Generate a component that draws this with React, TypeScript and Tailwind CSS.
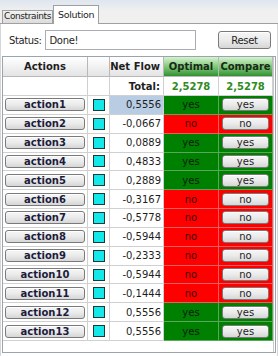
const rows: [string, string, boolean][] = [
  ['action1', '0,5556', true],
  ['action2', '-0,0667', false],
  ['action3', '0,0889', true],
  ['action4', '0,4833', true],
  ['action5', '0,2889', true],
  ['action6', '-0,3167', false],
  ['action7', '-0,5778', false],
  ['action8', '-0,5944', false],
  ['action9', '-0,2333', false],
  ['action10', '-0,5944', false],
  ['action11', '-0,1444', false],
  ['action12', '0,5556', true],
  ['action13', '0,5556', true],
]

const cols = 'grid grid-cols-[85px_22px_54px_55px_54px]'
const btn =
  'rounded-[3px] border border-[#7a7a7a] bg-gradient-to-b from-[#f6f6f6] via-[#ebebeb] to-[#d6d6d6] shadow-[inset_0_1px_0_#fff]'

export default function App() {
  return (
    <div
      className="flex h-[356px] w-[278px] flex-col overflow-hidden bg-white text-[10px] text-[#1e1e1e]"
      style={{ fontFamily: 'Tahoma, "DejaVu Sans", sans-serif' }}
    >
      {/* tab strip */}
      <div className="relative flex h-[24px] items-end border-b border-[#a0a0a0] bg-gradient-to-b from-[#dfe6ef] via-[#f0f0f0] to-[#f0f0f0] pl-[2px]">
        <div className="flex h-[13px] items-center border border-b-0 border-[#a0a0a0] bg-gradient-to-b from-[#f2f2f2] to-[#dcdcdc] px-[1px] text-[9px] tracking-[-0.4px]">
          Constraints
        </div>
        <div className="relative -mb-px flex h-[19px] items-center border border-b-0 border-[#a0a0a0] bg-white px-[4px] text-[9.5px] tracking-[-0.3px]">
          Solution
        </div>
      </div>

      {/* panel */}
      <div className="flex flex-1 flex-col border-l border-r border-[#d6d6d6] pb-[3px] pl-[1px] pr-[1px]">
        <div className="flex h-[32px] items-center pl-[7px] pr-[5px]">
          <span className="text-[10px] tracking-[-0.4px]">Status:</span>
          <div className="ml-[4px] flex h-[20px] w-[151px] items-center border border-[#abadb3] px-[3px] tracking-[-0.3px]">
            Done!
          </div>
          <div className="flex-1" />
          <div className={`flex h-[18px] w-[53px] items-center justify-center ${btn} tracking-[-0.3px]`}>
            Reset
          </div>
        </div>

        <div className="flex flex-1 border border-[#9aa4b0]">
          <div className="flex-1 bg-white">
            {/* header */}
            <div className={`${cols} h-[20px] font-bold`}>
              <div className="flex items-center justify-center border-b border-r border-[#b8b8b8] bg-gradient-to-b from-[#ffffff] to-[#e4e4e4]">
                Actions
              </div>
              <div className="border-b border-r border-[#b8b8b8] bg-gradient-to-b from-[#ffffff] to-[#e4e4e4]" />
              <div className="flex items-center justify-end border-b border-r border-[#b8b8b8] bg-gradient-to-b from-[#ffffff] to-[#e4e4e4] pr-[3px]">
                Net Flow
              </div>
              <div className="flex items-center justify-center border-b border-r border-[#b8b8b8] bg-gradient-to-b from-[#d6f2cf] via-[#7fc97a] to-[#2f912f] text-[#1a2a1a]">
                Optimal
              </div>
              <div className="flex items-center justify-center border-b border-r border-[#b8b8b8] bg-gradient-to-b from-[#d6f2cf] via-[#7fc97a] to-[#2f912f] text-[#1a2a1a]">
                Compare
              </div>
            </div>
            {/* total */}
            <div className={`${cols} h-[19px] font-bold`}>
              <div className="border-b border-r border-[#d0d0d0]" />
              <div className="border-b border-r border-[#d0d0d0]" />
              <div className="flex items-center justify-end border-b border-r border-[#d0d0d0] pr-[3px]">
                Total:
              </div>
              <div className="flex items-center justify-center border-b border-r border-[#d0d0d0] text-[#2e8b1e]">
                2,5278
              </div>
              <div className="flex items-center justify-center border-b border-r border-[#d0d0d0] text-[#2e8b1e]">
                2,5278
              </div>
            </div>
            {rows.map(([name, flow, ok], i) => (
              <div key={name} className={`${cols} h-[18.85px]`}>
                <div className="flex items-center border-b border-r border-[#d0d0d0] px-[2px]">
                  <div
                    className={`flex h-[13px] w-full items-center justify-center ${btn} font-bold text-[#1c1c3c]`}
                  >
                    {name}
                  </div>
                </div>
                <div className="flex items-center justify-center border-b border-r border-[#d0d0d0]">
                  <div className="h-[12px] w-[12px] border border-[#1a3a3a] bg-[#14e8e8]" />
                </div>
                <div
                  className={`flex items-center justify-end border-b border-r border-[#d0d0d0] pr-[2px] ${
                    i === 0 ? 'bg-[#b8cce4]' : ''
                  }`}
                >
                  {flow}
                </div>
                <div
                  className={`flex items-center justify-center border-b border-r ${
                    ok ? 'border-[#5aa65a] bg-[#008000] text-[#0c1a0c]' : 'border-[#e86060] bg-[#ff0000] text-[#3a0000]'
                  }`}
                >
                  {ok ? 'yes' : 'no'}
                </div>
                <div
                  className={`flex items-center justify-center border-b border-r px-[3px] ${
                    ok ? 'border-[#5aa65a] bg-[#008000]' : 'border-[#e86060] bg-[#ff0000]'
                  }`}
                >
                  <div className={`flex h-[13px] w-full items-center justify-center ${btn}`}>
                    {ok ? 'yes' : 'no'}
                  </div>
                </div>
              </div>
            ))}
          </div>
          <div className="w-[2px] border-l border-[#c8c8c8] bg-white" />
        </div>
      </div>
    </div>
  )
}
